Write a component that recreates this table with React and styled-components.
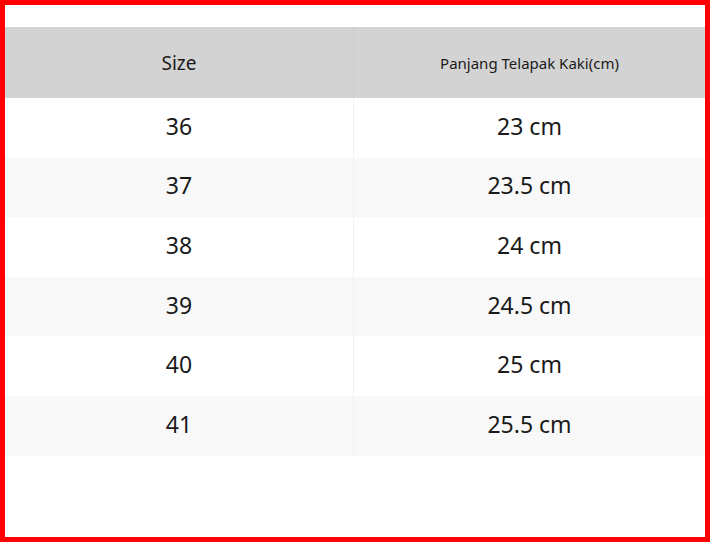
import React from 'react';
import styled, { createGlobalStyle } from 'styled-components';

const Global = createGlobalStyle`
    html, body {
        margin: 0;
        padding: 0;
        background: #fff;
    }
`;

const Frame = styled.div`
    width: 710px;
    height: 542px;
    box-sizing: border-box;
    border: 5px solid #ff0000;
    background: #fff;
    padding-top: 22px;
    font-family: 'Noto Sans', 'Open Sans', sans-serif;
    color: #1a1a1a;
`;

const Table = styled.div`
    display: grid;
    grid-template-columns: 348px 1fr;
`;

const HeadCell = styled.div`
    height: 71px;
    background: #d3d3d3;
    display: flex;
    align-items: center;
    justify-content: center;
    font-size: ${(p) => p.size}px;
    border-left: ${(p) => (p.divider ? '1px solid #cbcbcb' : 'none')};
`;

const Cell = styled.div`
    height: 59.6px;
    box-sizing: border-box;
    padding-bottom: 4px;
    display: flex;
    align-items: center;
    justify-content: center;
    font-size: 23px;
    background: ${(p) => (p.odd ? '#f8f8f8' : '#fff')};
    border-left: ${(p) => (p.divider ? '1px solid #f2f2f2' : 'none')};
`;

const rows = [
    ['36', '23 cm'],
    ['37', '23.5 cm'],
    ['38', '24 cm'],
    ['39', '24.5 cm'],
    ['40', '25 cm'],
    ['41', '25.5 cm'],
];

const App = () => {
    return (
        <Frame>
            <Global />
            <Table>
                <HeadCell size={19}>Size</HeadCell>
                <HeadCell size={15} divider>
                    Panjang Telapak Kaki(cm)
                </HeadCell>
                {rows.map(([size, len], i) => (
                    <React.Fragment key={size}>
                        <Cell odd={i % 2 === 1}>{size}</Cell>
                        <Cell odd={i % 2 === 1} divider>
                            {len}
                        </Cell>
                    </React.Fragment>
                ))}
            </Table>
        </Frame>
    );
};

export default App;
